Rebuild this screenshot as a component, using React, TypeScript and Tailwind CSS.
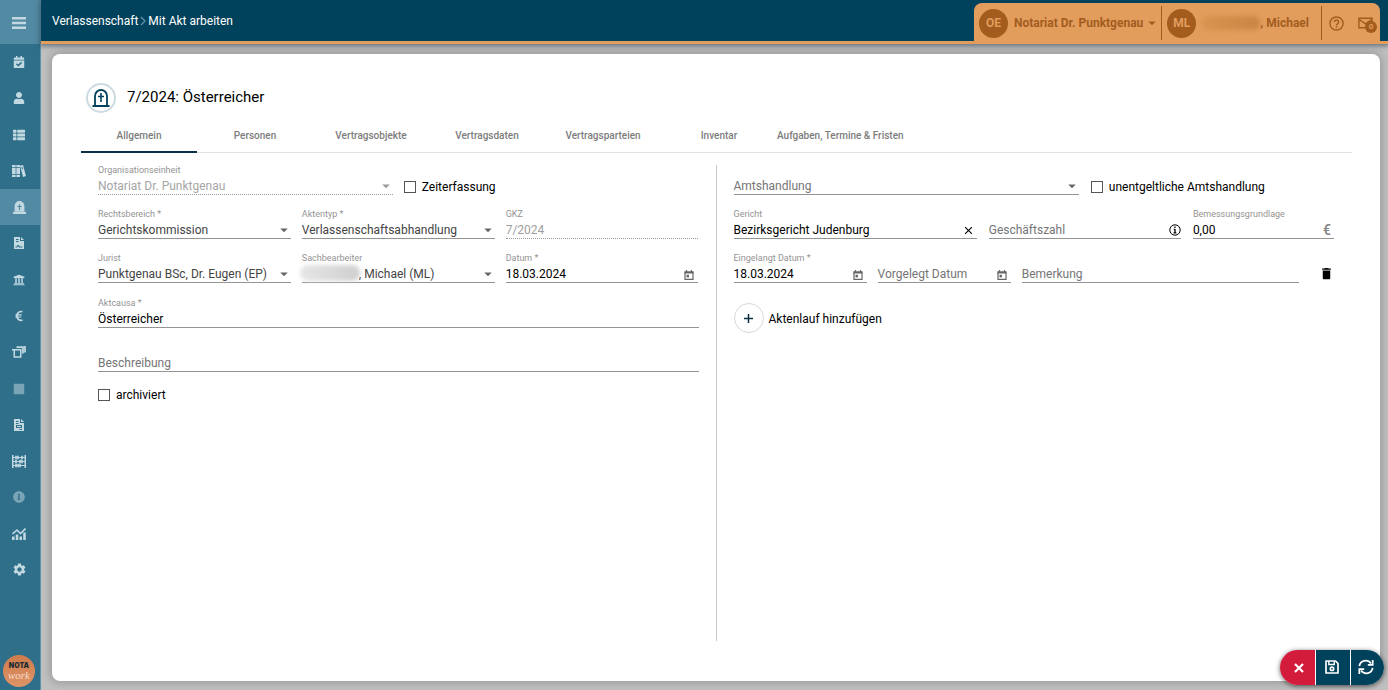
import { useId, useState, type ReactNode } from "react";
import { FaCalendarCheck, FaUser, FaThList, FaUniversity, FaEuroSign, FaInfoCircle, FaSquare } from "react-icons/fa";
import { MdSettings, MdArrowDropDown, MdDelete, MdClose } from "react-icons/md";

function BooksIcon() {
  return (
    <svg viewBox="0 0 42 36" width="14" height="12" fill="currentColor" fillRule="evenodd" aria-hidden="true">
      <path d="M0 0h11v6H0zM0 8h11v19H0zM0 29h11v7H0z" />
      <path d="M13 0h11v6H13zM13 8h11v19H13zM13 29h11v7H13z" />
      <path d="M24 2l9-2 9 33-9 3zM28 7l2 6 3-1-2-6z" />
    </svg>
  );
}

function TombSolid() {
  return (
    <svg viewBox="0 0 24 24" width="13" height="13" fill="currentColor" fillRule="evenodd" aria-hidden="true">
      <path d="M3 20V9a9 9 0 0 1 18 0v11zM11 6v3H8v2h3v6h2v-6h3V9h-3V6z" />
      <path d="M0 20h24v4H0z" />
    </svg>
  );
}

function TombOutline() {
  return (
    <svg viewBox="0 0 18 18" width="18" height="18" fill="none" stroke="currentColor" aria-hidden="true">
      <path d="M3 16.500V7a6 6 0 0 1 12 0v9.500" strokeWidth="1.800" />
      <path d="M0.500 17h17" strokeWidth="2" />
      <path d="M9 4v9M6 7.500h6" strokeWidth="1.600" />
    </svg>
  );
}

function ContractIcon() {
  return (
    <svg viewBox="0 0 20 24" width="10" height="12" fill="currentColor" fillRule="evenodd" aria-hidden="true">
      <path d="M0 0h12v8h8v16H0zM4 4v2h5V4zM4 8v2h5V8zM3 21h3l2-3 2 3h7v-2h-5l-3-3h-2l-2 3H3z" />
      <path d="M14 0l6 6h-6z" />
    </svg>
  );
}

function BoxesIcon() {
  return (
    <svg viewBox="0 0 28 24" width="14" height="12" fill="none" stroke="currentColor" aria-hidden="true">
      <path d="M4.500 7.500h13V22h-13z" strokeWidth="3" />
      <path d="M0 7.500h6" strokeWidth="3" />
      <path d="M9 2h13v13" strokeWidth="3.500" />
      <path d="M26 0v13" strokeWidth="3.500" />
    </svg>
  );
}

function DocIcon() {
  return (
    <svg viewBox="0 0 20 24" width="10" height="12" fill="currentColor" fillRule="evenodd" aria-hidden="true">
      <path d="M0 0h12v8h8v16H0zM4 4v2h5V4zM4 8v2h5V8zM4 12v6h12v-6zM6 14h8v2H6zM11 20v2h5v-2z" />
      <path d="M14 0l6 6h-6z" />
    </svg>
  );
}

function AbacusIcon() {
  return (
    <svg viewBox="0 0 28 26" width="14" height="13" fill="none" stroke="currentColor" aria-hidden="true">
      <path d="M1.500 0v26M26.500 0v26" strokeWidth="3" />
      <path d="M2 5h24M2 13h24M2 21h24" strokeWidth="2.400" />
      <path d="M8 1.500v7M12 1.500v7M20 1.500v7M8 9.500v7M16 9.500v7M20 9.500v7M8 17.500v7M12 17.500v7M16 17.500v7" strokeWidth="3.400" />
    </svg>
  );
}

function ChartIcon() {
  return (
    <svg viewBox="0 0 28 24" width="14" height="12" fill="none" stroke="currentColor" aria-hidden="true">
      <path d="M2.500 24v-7M10 24v-11M17.500 24v-7M25 24V9" strokeWidth="5" />
      <path d="M1 12l9-8 7 7L27 1" strokeWidth="3.200" />
    </svg>
  );
}

function CalendarIcon() {
  return (
    <svg viewBox="0 0 10 10" width="10" height="10" aria-hidden="true" fill="none" stroke="currentColor">
      <path d="M1 2h8v7.400H1z" strokeWidth="1.200" />
      <path d="M0.500 2.500h9" strokeWidth="2" />
      <path d="M2.500 0v2M7.500 0v2" strokeWidth="1.200" />
      <path d="M2.500 4.800h2.500v2.500H2.500z" fill="currentColor" stroke="none" />
    </svg>
  );
}

function InfoIcon() {
  return (
    <svg viewBox="0 0 12 12" width="12" height="12" aria-hidden="true" fill="none" stroke="currentColor">
      <circle cx="6" cy="6" r="5.200" strokeWidth="1" />
      <path d="M6 2.500v1.500M6 5v4M4.800 5.400H6M4.600 8.800h2.800" strokeWidth="1.300" />
    </svg>
  );
}

function HelpIcon() {
  return (
    <svg viewBox="0 0 16 16" width="15" height="15" aria-hidden="true" fill="none" stroke="currentColor">
      <circle cx="8" cy="8" r="7" strokeWidth="1.500" />
      <path d="M5.800 6.400a2.200 2.200 0 1 1 3.300 1.900c-.8.450-1.100.8-1.100 1.700" strokeWidth="1.600" />
      <path d="M8 11v1.600" strokeWidth="1.700" />
    </svg>
  );
}

function MailIcon() {
  return (
    <svg viewBox="0 0 16 12" width="15" height="12" aria-hidden="true" fill="none" stroke="currentColor" strokeWidth="1.500">
      <path d="M1 1h14v10H1z" />
      <path d="M1 2l7 5 7-5" />
    </svg>
  );
}

function SaveIcon() {
  return (
    <svg viewBox="0 0 14 14" width="14" height="14" aria-hidden="true" fill="none" stroke="currentColor" strokeWidth="1.700">
      <path d="M1 1h9.500L13 3.500V13H1z" strokeLinejoin="round" />
      <path d="M3.800 1v3.500h5.500V1" strokeWidth="1.400" />
      <circle cx="7" cy="8.800" r="1.700" />
    </svg>
  );
}

function RefreshIcon() {
  return (
    <svg viewBox="0 0 18 18" width="16" height="16" aria-hidden="true" fill="none" stroke="currentColor" strokeWidth="2">
      <path d="M1.500 8A7.200 7.200 0 0 1 14.500 5M16.500 10A7.200 7.200 0 0 1 3.500 13" />
      <path d="M16.500 1v5.500h-5.500M1.500 17v-5.500h5.500" />
    </svg>
  );
}

const navItems: { name: string; icon: ReactNode; active?: boolean; dim?: boolean }[] = [
  { name: "Kalender", icon: <FaCalendarCheck size={12} /> },
  { name: "Personen", icon: <FaUser size={12} /> },
  { name: "Listen", icon: <FaThList size={12} /> },
  { name: "Register", icon: <BooksIcon /> },
  { name: "Verlassenschaft", icon: <TombSolid />, active: true },
  { name: "Verträge", icon: <ContractIcon /> },
  { name: "Gericht", icon: <FaUniversity size={12} /> },
  { name: "Finanzen", icon: <FaEuroSign size={12} /> },
  { name: "Ablage", icon: <BoxesIcon /> },
  { name: "Modul", icon: <FaSquare size={12} />, dim: true },
  { name: "Dokumente", icon: <DocIcon /> },
  { name: "Buchhaltung", icon: <AbacusIcon /> },
  { name: "Information", icon: <FaInfoCircle size={12} />, dim: true },
  { name: "Auswertungen", icon: <ChartIcon /> },
  { name: "Einstellungen", icon: <MdSettings size={15} /> },
];

const tabs = [
  "Allgemein",
  "Personen",
  "Vertragsobjekte",
  "Vertragsdaten",
  "Vertragsparteien",
  "Inventar",
  "Aufgaben, Termine & Fristen",
];

const controlBase = "h-[18px] w-full min-w-0 appearance-none rounded-none bg-transparent p-0 text-[12px] leading-[18px] outline-none";

function Field({
  label,
  id,
  empty,
  disabled,
  children,
}: {
  label: string;
  id: string;
  empty?: boolean;
  disabled?: boolean;
  children: ReactNode;
}) {
  return (
    <div className="relative flex min-w-0 flex-col pt-[13px]">
      <label
        htmlFor={id}
        className={
          empty
            ? "absolute top-[14px] left-0 text-[12px] leading-[18px] whitespace-nowrap text-[#757575]"
            : "absolute top-0 left-0 text-[9px] leading-[14px] whitespace-nowrap text-[#949494]"
        }
      >
        {label}
      </label>
      <div
        className={
          disabled
            ? "relative flex h-[19px] items-center border-b border-dotted border-[#9a9a9a] pt-px"
            : "relative flex h-[19px] items-center border-b border-[#949494] pt-px"
        }
      >
        {children}
      </div>
    </div>
  );
}

function TextField({
  label,
  value = "",
  disabled,
  action,
}: {
  label: string;
  value?: string;
  disabled?: boolean;
  action?: ReactNode;
}) {
  const id = useId();
  const [text, setText] = useState(value);
  return (
    <Field label={label} id={id} empty={!text} disabled={disabled}>
      <input
        id={id}
        type="text"
        value={text}
        onChange={(e) => setText(e.target.value)}
        disabled={disabled}
        className={`${controlBase} text-black disabled:text-[#9e9e9e]`}
      />
      {action}
    </Field>
  );
}

function SelectField({
  label,
  value,
  disabled,
  redacted,
}: {
  label: string;
  value?: string;
  disabled?: boolean;
  redacted?: boolean;
}) {
  const id = useId();
  return (
    <Field label={label} id={id} empty={!value} disabled={disabled}>
      {redacted && (
        <span className="pointer-events-none absolute top-px -left-0.5 h-4 w-15 rounded-full bg-linear-to-r from-[#e6e6e6] to-[#cfcfcf] blur-[2px]" />
      )}
      <select
        id={id}
        disabled={disabled}
        className={
          redacted
            ? `${controlBase} pl-[57px] text-[#444]`
            : `${controlBase} text-[#444] disabled:text-[#a6a6a6] disabled:opacity-100`
        }
      >
        <option>{value ?? ""}</option>
      </select>
      <MdArrowDropDown
        size={18}
        className={
          disabled
            ? "pointer-events-none absolute top-px -right-0.5 text-[#9a9a9a]"
            : "pointer-events-none absolute top-px -right-0.5 text-[#666]"
        }
      />
    </Field>
  );
}

function Check({ label }: { label: string }) {
  return (
    <label className="flex items-center gap-1.5 text-[12px] leading-4 whitespace-nowrap text-black">
      <input
        type="checkbox"
        className="size-3 appearance-none border border-[#555] bg-white checked:bg-[#00425b]"
      />
      {label}
    </label>
  );
}

function DateButton() {
  return (
    <button type="button" aria-label="Kalender öffnen" className="mt-0.5 mr-1 shrink-0 text-[#666]">
      <CalendarIcon />
    </button>
  );
}

function Sidebar() {
  return (
    <aside className="flex w-[41px] shrink-0 flex-col border-r border-[#5f93aa] bg-[#2f6f8a]">
      <button type="button" aria-label="Menü" className="flex h-11 items-center justify-center bg-[#538aa3] pt-0.5 pr-0.5 text-[#c2d9e2]">
        <svg viewBox="0 0 14 12" width="14" height="12" fill="currentColor" aria-hidden="true">
          <path d="M0 0h14v2.400H0zM0 4.800h14v2.400H0zM0 9.600h14v2.400H0z" />
        </svg>
      </button>
      <nav className="flex h-[544px] flex-col">
        {navItems.map((item) => (
          <a
            key={item.name}
            href="#"
            aria-label={item.name}
            className={
              item.active
                ? "flex flex-1 items-center justify-center bg-[#538aa3] pr-0.5 text-[#c2d9e2]"
                : item.dim
                  ? "flex flex-1 items-center justify-center pr-0.5 text-[#7ba5b6]"
                  : "flex flex-1 items-center justify-center pr-0.5 text-[#c2d9e2]"
            }
          >
            {item.icon}
          </a>
        ))}
      </nav>
      <div className="mt-auto mb-[3px] ml-[3px] flex size-8 flex-col items-center justify-center rounded-full bg-linear-to-b from-[#cf7c4c] to-[#dd9468]">
        <span className="font-[Inter,sans-serif] text-[7px] leading-[8px] font-black text-[#1f2d33]">NOTA</span>
        <span className="font-['Liberation_Serif',serif] text-[11px] leading-[10px] text-[#f6dcc8] italic">work</span>
      </div>
    </aside>
  );
}

function Header() {
  return (
    <header className="relative z-10 flex h-11 shrink-0 border-b-3 border-[#e29d5d] bg-[#00425b] pr-2 shadow-[0_1px_5px_1px_rgba(40,60,75,0.6)]">
      <nav className="flex h-[41px] items-center gap-0.5 pl-[11px] text-[12px] text-white">
        <a href="#">Verlassenschaft</a>
        <svg viewBox="0 0 6 10" width="6" height="10" fill="none" stroke="#5c8ea5" strokeWidth="1.500" aria-hidden="true">
          <path d="M1 1l4 4-4 4" />
        </svg>
        <a href="#">Mit Akt arbeiten</a>
      </nav>
      <div className="mt-[3px] ml-auto flex items-center rounded-t-lg bg-[#e29d5d] pt-0.5 pl-[5px] text-[12px] font-bold text-[#a35c1d]">
        <button type="button" className="flex items-center">
          <span className="flex size-[29px] items-center justify-center rounded-full bg-[#a35c1d] text-[#e29d5d]">OE</span>
          <span className="ml-1.5">Notariat Dr. Punktgenau</span>
          <MdArrowDropDown size={18} />
        </button>
        <div className="h-[34px] w-px bg-[#a35c1d]" />
        <button type="button" className="ml-[5px] flex items-center">
          <span className="flex size-[29px] items-center justify-center rounded-full bg-[#a35c1d] text-[#e29d5d]">ML</span>
          <span className="ml-[5px] h-3.5 w-[59px] rounded-full bg-linear-to-r from-[#d99452] to-[#cb8443] blur-[2px]" />
          <span>, Michael</span>
        </button>
        <div className="ml-3 h-[34px] w-px bg-[#a35c1d]" />
        <button type="button" aria-label="Hilfe" className="ml-[7px]">
          <HelpIcon />
        </button>
        <button type="button" aria-label="Nachrichten" className="relative mr-[7px] ml-3.5">
          <MailIcon />
          <span className="absolute -right-1 -bottom-1 flex size-3 items-center justify-center rounded-full bg-[#a35c1d] text-[8px] text-[#e29d5d]">
            0
          </span>
        </button>
      </div>
    </header>
  );
}

export default function App() {
  const [activeTab, setActiveTab] = useState(0);
  return (
    <div className="flex min-h-screen bg-[#c0c0c0] font-[Roboto,sans-serif] text-black">
      <Sidebar />
      <div className="flex min-w-0 flex-1 flex-col">
        <Header />
        <main className="mt-2.5 mr-2 mb-[9px] ml-[11px] flex flex-1 flex-col rounded-lg bg-white pr-7 pb-10 pl-[29px] shadow-[0_0_9px_2px_rgba(0,0,0,0.2)]">
          <div className="mt-[29px] flex items-center gap-[11px] pl-[5px]">
            <span className="flex size-[30px] items-center justify-center rounded-full border-2 border-[#ccdae1] text-[#00425b]">
              <TombOutline />
            </span>
            <h1 className="pb-0.5 text-[15px] leading-5">7/2024: Österreicher</h1>
          </div>
          <div role="tablist" className="mt-[5px] flex border-b border-[#e3e3e3]">
            {tabs.map((tab, i) => (
              <button
                key={tab}
                type="button"
                role="tab"
                aria-selected={i === activeTab}
                onClick={() => setActiveTab(i)}
                className={
                  i === activeTab
                    ? "-mb-px h-[35px] min-w-[116px] border-b-2 border-[#0d3049] pt-0.5 text-[10px] font-medium text-[#7d7d7d]"
                    : "-mb-px h-[35px] min-w-[116px] border-b-2 border-transparent pt-0.5 text-[10px] font-medium text-[#7d7d7d]"
                }
              >
                {tab}
              </button>
            ))}
          </div>
          <form className="flex flex-1 gap-[17px] pr-[18px] pl-[17px]">
            <section className="mt-2.5 flex min-w-0 flex-1 flex-col gap-3">
              <div className="grid grid-cols-2 gap-[11px]">
                <SelectField label="Organisationseinheit" value="Notariat Dr. Punktgenau" disabled />
                <div className="flex items-end">
                  <Check label="Zeiterfassung" />
                </div>
              </div>
              <div className="grid grid-cols-3 gap-x-[11px] gap-y-3">
                <SelectField label="Rechtsbereich *" value="Gerichtskommission" />
                <SelectField label="Aktentyp *" value="Verlassenschaftsabhandlung" />
                <TextField label="GKZ" value="7/2024" disabled />
                <SelectField label="Jurist" value="Punktgenau BSc, Dr. Eugen (EP)" />
                <SelectField label="Sachbearbeiter" value=", Michael (ML)" redacted />
                <TextField label="Datum *" value="18.03.2024" action={<DateButton />} />
              </div>
              <div className="flex flex-col gap-3 pt-px">
                <TextField label="Aktcausa *" value="Österreicher" />
                <TextField label="Beschreibung" />
              </div>
              <div className="mt-[3px] flex">
                <Check label="archiviert" />
              </div>
            </section>
            <div className="mt-3 w-px bg-[#c8c8c8]" />
            <section className="mt-2.5 flex min-w-0 flex-1 flex-col gap-3">
              <div className="grid grid-cols-[345fr_243fr] gap-3">
                <SelectField label="Amtshandlung" />
                <div className="flex items-end">
                  <Check label="unentgeltliche Amtshandlung" />
                </div>
              </div>
              <div className="grid grid-cols-[243fr_192fr_141fr] gap-3">
                <TextField
                  label="Gericht"
                  value="Bezirksgericht Judenburg"
                  action={
                    <button type="button" aria-label="Gericht entfernen" className="mt-0.5 mr-0.5 shrink-0">
                      <MdClose size={13} />
                    </button>
                  }
                />
                <TextField
                  label="Geschäftszahl"
                  action={
                    <button type="button" aria-label="Information" className="shrink-0">
                      <InfoIcon />
                    </button>
                  }
                />
                <TextField
                  label="Bemessungsgrundlage"
                  value="0,00"
                  action={<span className="mr-[3px] text-[14px] leading-[18px] font-medium text-[#858585]">€</span>}
                />
              </div>
              <div className="grid grid-cols-[133fr_133fr_277fr_24px] gap-[11px]">
                <TextField label="Eingelangt Datum *" value="18.03.2024" action={<DateButton />} />
                <TextField label="Vorgelegt Datum" action={<DateButton />} />
                <TextField label="Bemerkung" />
                <button type="button" aria-label="Löschen" className="flex items-end justify-end pb-0.5">
                  <MdDelete size={15} />
                </button>
              </div>
              <button type="button" className="mt-2 flex items-center gap-[5px] text-[12px]">
                <span className="flex size-[30px] items-center justify-center rounded-full border border-[#d3d9dc] text-[#0d3049]">
                  <svg viewBox="0 0 9 9" width="9" height="9" stroke="currentColor" strokeWidth="1.500" aria-hidden="true">
                    <path d="M4.500 0v9M0 4.500h9" />
                  </svg>
                </span>
                <span className="pt-px">Aktenlauf hinzufügen</span>
              </button>
            </section>
          </form>
        </main>
      </div>
      <div className="fixed right-1 bottom-[5px] z-20 flex h-[35px] gap-px overflow-hidden rounded-full bg-white text-white shadow-[0_1px_5px_rgba(0,0,0,0.6)]">
        <button type="button" aria-label="Abbrechen" className="flex w-[35px] items-center justify-center bg-[#d31c3c] pl-0.5">
          <svg viewBox="0 0 10 10" width="10" height="10" stroke="currentColor" strokeWidth="2.200" aria-hidden="true">
            <path d="M1 1l8 8M9 1l-8 8" />
          </svg>
        </button>
        <button type="button" aria-label="Speichern" className="flex w-[34px] items-center justify-center bg-[#00425b] pr-0.5 pb-0.5">
          <SaveIcon />
        </button>
        <button type="button" aria-label="Aktualisieren" className="flex w-[33px] items-center justify-center bg-[#00425b] pr-1 pb-0.5">
          <RefreshIcon />
        </button>
      </div>
    </div>
  );
}
